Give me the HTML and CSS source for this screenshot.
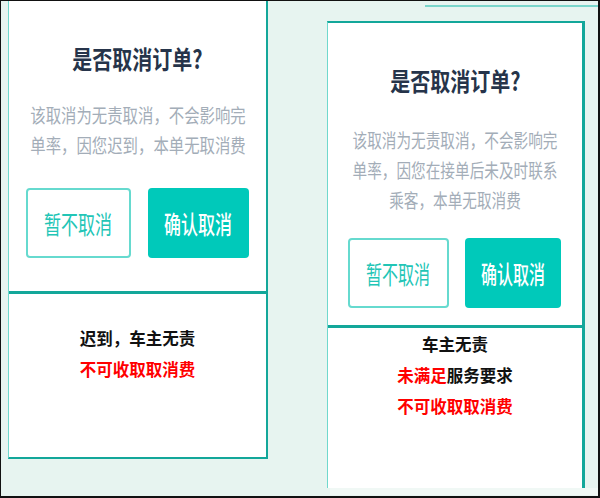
FILE: index.html
```html
<!DOCTYPE html>
<html lang="zh-CN">
<head>
  <meta charset="UTF-8" />
  <title>取消订单弹窗</title>
  <link rel="stylesheet" href="styles.css">
</head>
<body>
  <div class="frame">
    <!-- case 1: driver late -->
    <section class="dialog dialog-late">
      <div class="dialog-body">
        <h2 class="dialog-title"><span>是否取消订单?</span></h2>
        <p class="dialog-text"><span>该取消为无责取消，不会影响完<br>单率，因您迟到，本单无取消费</span></p>
        <div class="dialog-actions">
          <button class="btn btn-ghost"><span>暂不取消</span></button>
          <button class="btn btn-solid"><span>确认取消</span></button>
        </div>
      </div>
      <div class="verdict">
        <p>迟到，车主无责</p>
        <p class="red">不可收取取消费</p>
      </div>
    </section>

    <!-- case 2: passenger not contacted in time -->
    <div class="side">
      <div class="edge-line"></div>
      <section class="dialog dialog-contact">
        <div class="dialog-body">
          <h2 class="dialog-title"><span>是否取消订单?</span></h2>
          <p class="dialog-text"><span>该取消为无责取消，不会影响完<br>单率，因您在接单后未及时联系<br>乘客，本单无取消费</span></p>
          <div class="dialog-actions">
            <button class="btn btn-ghost"><span>暂不取消</span></button>
            <button class="btn btn-solid"><span>确认取消</span></button>
          </div>
        </div>
        <div class="verdict">
          <p>车主无责</p>
          <p><span class="red">未满足</span>服务要求</p>
          <p class="red">不可收取取消费</p>
        </div>
      </section>
      <div class="side-foot"></div>
    </div>
  </div>
</body>
</html>
```

FILE: styles.css
```css
body {
  margin: 0;
  font-family: "Noto Sans CJK SC", "Noto Sans", sans-serif;
}
.frame {
  width: 600px;
  height: 498px;
  box-sizing: border-box;
  border-style: solid;
  border-color: #111;
  border-width: 1px 2px 2px 1px;
  background: #e7f4f0;
  display: flex;
  align-items: flex-start;
}

/* dialog card */
.dialog {
  background: #fff;
  box-sizing: border-box;
  display: flex;
  flex-direction: column;
  border-left: 1px solid #70d8cd;
  border-right: 2px solid #13a79a;
}
.dialog-late {
  width: 260px;
  height: 458px;
  margin-left: 7px;
  border-bottom: 2px solid #13a79a;
}
.dialog-contact {
  width: 258px;
  height: 467px;
  margin-top: 14px;
  border-top: 2px solid #13a79a;
  border-right-width: 3px;
}

.dialog-body {
  padding-top: 42px;
}
.dialog-late .dialog-body {
  padding-bottom: 33px;
}
.dialog-contact .dialog-body {
  padding-bottom: 17px;
}

.dialog-title {
  margin: 0;
  display: flex;
  justify-content: center;
  font-size: 25px;
  line-height: 30px;
  font-weight: 700;
  color: #26344a;
}
.dialog-title span {
  display: inline-block;
  white-space: nowrap;
  transform: scaleX(.8);
}

.dialog-text {
  margin: 27px 0 28px;
  display: flex;
  justify-content: center;
  font-size: 19px;
  line-height: 30px;
  color: #a3adb8;
  text-align: center;
}
.dialog-text span {
  display: inline-block;
  white-space: nowrap;
  transform: scaleX(.81);
}
.dialog-contact .dialog-text {
  margin: 30px 0 23px;
}
.dialog-contact .dialog-text span {
  transform: scaleX(.77);
}

/* buttons */
.dialog-actions {
  display: flex;
  gap: 17px;
  padding: 0 17px;
}
.dialog-contact .dialog-actions {
  gap: 16px;
  padding: 0 21px 0 20px;
}
.btn {
  flex: 1;
  min-width: 0;
  height: 70px;
  box-sizing: border-box;
  border-radius: 4px;
  font-family: inherit;
  font-size: 25px;
  cursor: pointer;
  display: flex;
  align-items: center;
  justify-content: center;
  padding: 0;
}
.btn span {
  display: inline-block;
  white-space: nowrap;
  transform: scaleX(.68);
}
.dialog-contact .btn span {
  transform: scaleX(.64);
}
.btn-ghost {
  background: #fff;
  border: 2px solid #66dacf;
  color: #22c5b6;
}
.btn-solid {
  background: #00c9ba;
  border: none;
  color: #fff;
  font-weight: 500;
}

/* rule result under each dialog */
.verdict {
  flex: 1;
  border-top: 3px solid #13a79a;
  text-align: center;
  font-size: 16.5px;
  line-height: 31px;
  font-weight: 700;
  color: #111;
}
.dialog-late .verdict {
  padding-top: 29px;
}
.dialog-contact .verdict {
  padding-top: 1px;
}
.verdict p {
  margin: 0;
}
.red {
  color: #ff0000;
}

.side {
  flex: 1;
  margin-left: 59px;
  display: flex;
  flex-direction: column;
}
.edge-line {
  align-self: flex-end;
  width: 173px;
  height: 2px;
  margin-top: 4px;
  background: #7ad6cb;
}
.side-foot {
  height: 7px;
  margin-left: 3px;
  background: #f0f8f5;
}
```
